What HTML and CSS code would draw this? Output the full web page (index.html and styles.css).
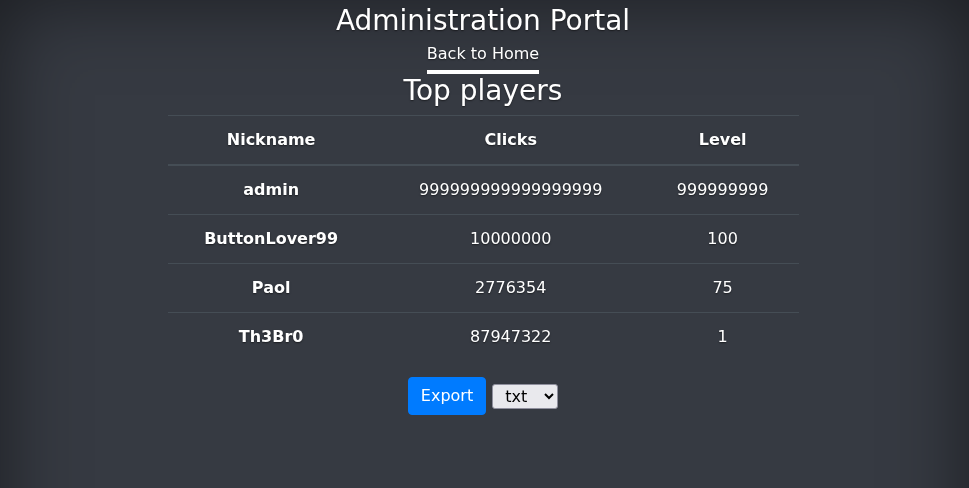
FILE: index.html
```html
<!DOCTYPE html>
<html>
<head>
<meta charset="utf-8">
<link rel="stylesheet" href="styles.css">
</head>
<body>
<div class="cover">
  <header class="masthead">
    <h3 class="brand">Administration Portal</h3>
    <nav class="nav"><a class="nav-link active" href="#">Back to Home</a></nav>
  </header>
  <main class="main">
    <h3 class="title">Top players</h3>
    <table class="players">
      <thead>
        <tr><th>Nickname</th><th>Clicks</th><th>Level</th></tr>
      </thead>
      <tbody>
        <tr><th>admin</th><td>999999999999999999</td><td>999999999</td></tr>
        <tr><th>ButtonLover99</th><td>10000000</td><td>100</td></tr>
        <tr><th>Paol</th><td>2776354</td><td>75</td></tr>
        <tr><th>Th3Br0</th><td>87947322</td><td>1</td></tr>
      </tbody>
    </table>
    <form class="export">
      <button type="button" class="btn">Export</button>
      <select class="fmt"><option>txt</option><option>json</option><option>html</option></select>
    </form>
  </main>
</div>
</body>
</html>
```
FILE: styles.css
```css
html { height: 100%; background-color: #363a42; }
body {
  margin: 0;
  min-height: 100%;
  color: #fff;
  font-family: "DejaVu Sans", sans-serif;
  font-size: 16px;
  line-height: 1.5;
  text-align: center;
  text-shadow: 0 .05rem .1rem rgba(0,0,0,.5);
}
body::before {
  content: "";
  position: fixed;
  top: 0;
  left: 0;
  right: 0;
  bottom: -120px;
  box-shadow: inset 0 0 5rem rgba(0,0,0,.5);
  pointer-events: none;
}
.cover {
  width: 631px;
  margin: 0 auto;
  position: relative;
  left: -1.5px;
}
.masthead { padding-top: 4px; }
.brand {
  margin: 0;
  font-size: 28px;
  font-weight: 400;
  line-height: 1.2;
}
.nav { display: flex; justify-content: center; margin-top: 4px; }
.nav-link {
  color: #fff;
  text-decoration: none;
  padding: 0 0 4px;
  border-bottom: 4px solid #fff;
  line-height: 1.5;
}
.title {
  margin: 0;
  font-size: 28px;
  font-weight: 400;
  line-height: 1.2;
}
.players {
  width: 100%;
  border-collapse: collapse;
  margin-top: 8px;
  color: #fff;
  background: transparent;
}
.players th, .players td {
  padding: 12px;
  border-top: 1px solid #454d55;
  vertical-align: top;
}
.players thead th { border-bottom: 2px solid #454d55; font-weight: 700; }
.players tbody th { font-weight: 700; }
.players td { font-weight: 400; }
.export {
  display: flex;
  justify-content: center;
  align-items: center;
  gap: 6px;
  margin-top: 16px;
}
.btn {
  font-family: "DejaVu Sans", sans-serif;
  font-size: 16px;
  line-height: 1.5;
  color: #fff;
  background: #007bff;
  border: 1px solid #007bff;
  border-radius: 4px;
  padding: 6px 12px;
}
.fmt {
  font-family: "DejaVu Sans", sans-serif;
  font-size: 16px;
  height: 25px;
  width: 66px;
  padding: 0 4px 0 8px;
  background: #e9e9ed;
  color: #000;
  border: 1px solid #8f8f9d;
  border-radius: 3px;
}
```
